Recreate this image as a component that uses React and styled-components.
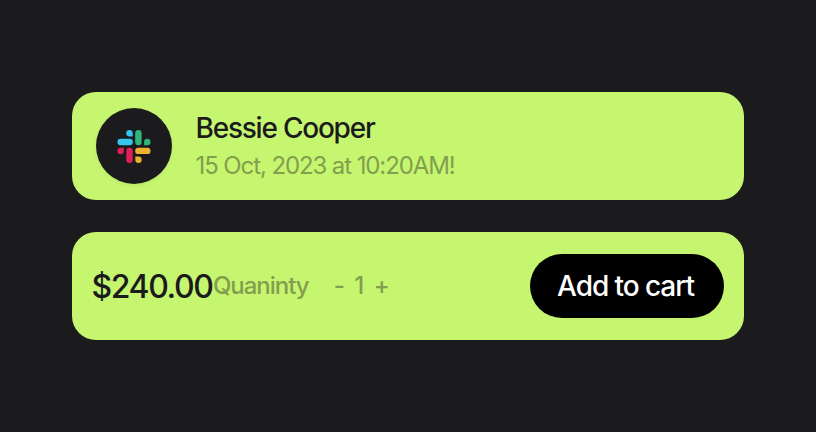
import React from "react";
import styled, { createGlobalStyle } from "styled-components";

const GlobalStyle = createGlobalStyle`
  * { box-sizing: border-box; }
  body { margin: 0; background: #1b1b1d; font-family: Inter, sans-serif; }
`;

const Page = styled.main`
  width: 816px;
  height: 432px;
  padding: 92px 72px;
  display: flex;
  flex-direction: column;
  gap: 32px;
  background: #1b1b1d;
`;

const Card = styled.section`
  height: 108px;
  display: flex;
  align-items: center;
  padding: 0 ${({ $inset }) => $inset}px;
  border-radius: 24px;
  background: #c6f66f;
  white-space: nowrap;
`;

const Avatar = styled.div`
  width: 76px;
  height: 76px;
  margin-right: 23.5px;
  display: grid;
  place-items: center;
  border-radius: 50%;
  background: #1b1b1d;
  box-shadow: 0 2px 4px rgba(0, 0, 0, 0.05);
`;

const Details = styled.div`
  display: flex;
  flex-direction: column;
`;

const Name = styled.h1`
  margin: 0;
  font-size: 28px;
  line-height: 40px;
  font-weight: 500;
  letter-spacing: -1.22px;
  color: #1b1b1d;
`;

const Timestamp = styled.p`
  margin: 0;
  font-size: 24px;
  line-height: 36px;
  letter-spacing: -1.1px;
  color: #829e4e;
`;

const Price = styled.span`
  margin-left: -0.5px;
  font-size: 32px;
  font-weight: 500;
  letter-spacing: -1.42px;
  color: #1b1b1d;
`;

const Quantity = styled.div`
  display: flex;
  align-items: center;
  margin-left: 0.5px;
  padding-bottom: 2px;
  font-size: 24px;
  font-weight: 500;
  color: #829e4e;
`;

const QuantityLabel = styled.span`
  letter-spacing: -1.02px;
  margin-right: 25px;
`;

const Stepper = styled.div`
  display: flex;
  gap: 9.5px;
`;

const CartButton = styled.button`
  width: 194px;
  height: 64px;
  margin-left: auto;
  padding: 0 3px 0 0;
  border: 0;
  border-radius: 32px;
  background: #000;
  color: #fff;
  font: 500 28px Inter, sans-serif;
  letter-spacing: -1.06px;
`;

const SlackLogo = () => (
  <svg width="33" height="33" viewBox="0.5 0 33 33" overflow="visible">
    <g fill="#36c5f0">
      <rect y="8.8" width="15.3" height="6.4" rx="3.2" />
      <path d="M12 0a3.2 3.2 0 0 1 3.2 3.2v3.2H12A3.2 3.2 0 0 1 12 0z" />
    </g>
    <g fill="#2eb67d">
      <rect x="17.7" width="6.4" height="15.3" rx="3.2" />
      <path d="M33 12a3.2 3.2 0 0 1-3.2 3.2h-3.2V12a3.2 3.2 0 0 1 6.4 0z" />
    </g>
    <g fill="#ecb22e">
      <rect x="17.7" y="17.7" width="15.3" height="6.4" rx="3.2" />
      <path d="M21 33a3.2 3.2 0 0 1-3.2-3.2v-3.2H21a3.2 3.2 0 0 1 0 6.4z" />
    </g>
    <g fill="#e01e5a">
      <rect x="8.8" y="17.7" width="6.4" height="15.3" rx="3.2" />
      <path d="M0 21a3.2 3.2 0 0 1 3.2-3.2h3.2V21A3.2 3.2 0 0 1 0 21z" />
    </g>
  </svg>
);

export default function App() {
  return (
    <>
      <GlobalStyle />
      <Page>
        <Card $inset={24}>
          <Avatar><SlackLogo /></Avatar>
          <Details>
            <Name>Bessie Cooper</Name>
            <Timestamp>15 Oct, 2023 at 10:20AM!</Timestamp>
          </Details>
        </Card>
        <Card $inset={20}>
          <Price>$240.00</Price>
          <Quantity>
            <QuantityLabel>Quaninty</QuantityLabel>
            <Stepper><span>-</span><span>1</span><span>+</span></Stepper>
          </Quantity>
          <CartButton>Add to cart</CartButton>
        </Card>
      </Page>
    </>
  );
}
